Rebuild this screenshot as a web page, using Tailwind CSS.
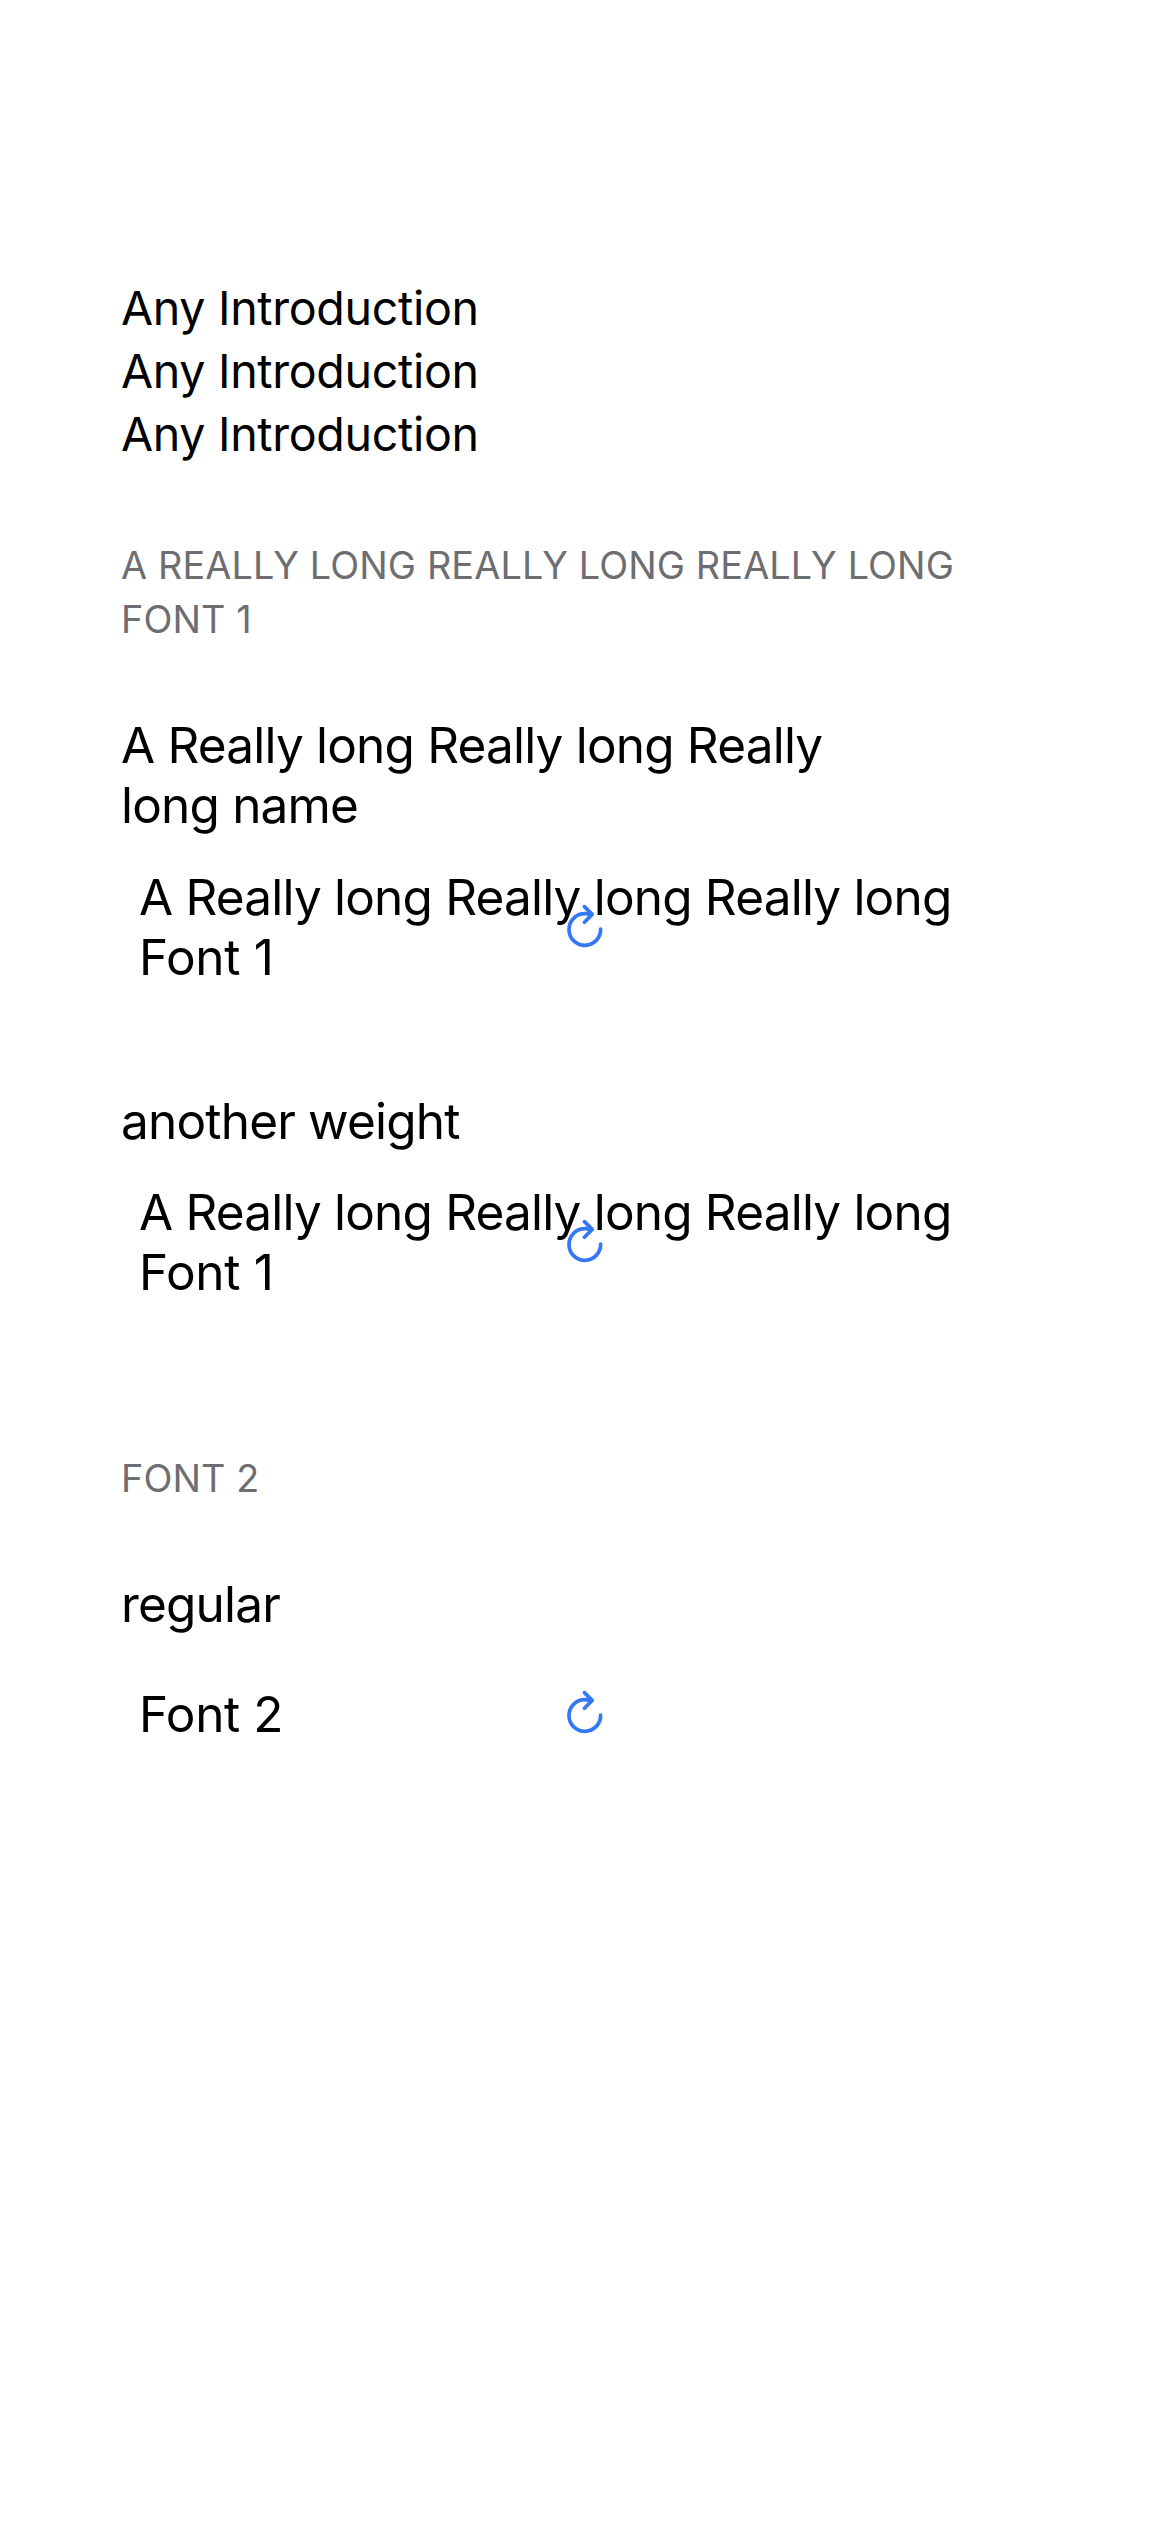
<!DOCTYPE html>
<html lang="en"><head><meta charset="utf-8"><title>Fonts</title>
<script src="https://cdn.jsdelivr.net/npm/@tailwindcss/browser@4"></script></head>
<body class="bg-white text-black font-['Inter',sans-serif]">
<svg class="hidden"><symbol id="reload" viewBox="0 0 40 46"><path d="M35.6 26A15.8 15.8 0 1 1 19.8 10.7Q23.5 10.7 27 11.4M19.4 3.6l7.8 7.8-7.8 7.8" fill="none" stroke="#3478f6" stroke-width="3.7" stroke-linecap="round" stroke-linejoin="round"/></symbol></svg>
<main class="flex min-h-[2532px] flex-col px-[121px] pt-[277px] text-[49.5px] leading-[60px] tracking-[-0.81px] whitespace-nowrap">
<section class="text-[46.6px] leading-[63px] tracking-[-0.33px]"><p>Any Introduction</p><p>Any Introduction</p><p>Any Introduction</p></section>
<h2 class="mt-[72px] text-[37.8px] leading-[54px] tracking-[0.13px] text-[#6d6d72]">A REALLY LONG REALLY LONG REALLY LONG<br>FONT 1</h2>
<p class="mt-[69px]">A Really long Really long Really<br>long name</p>
<div class="relative mt-[32px] pl-[18px]"><p>A Really long Really long Really long<br><span class="tracking-[-0.3px]">Font 1</span></p>
<svg class="absolute left-[444px] top-[36px] h-[46px] w-[40px]"><use href="#reload"/></svg></div>
<p class="mt-[104px]">another weight</p>
<div class="relative mt-[31px] pl-[18px]"><p>A Really long Really long Really long<br><span class="tracking-[-0.3px]">Font 1</span></p>
<svg class="absolute left-[444px] top-[36px] h-[46px] w-[40px]"><use href="#reload"/></svg></div>
<h2 class="mt-[149px] text-[37.8px] leading-[54px] tracking-[0.13px] text-[#6d6d72]">FONT 2</h2>
<p class="mt-[69px]">regular</p>
<div class="relative mt-[50px] pl-[18px]"><p class="tracking-[-0.4px]">Font 2</p>
<svg class="absolute left-[444px] top-[5px] h-[46px] w-[40px]"><use href="#reload"/></svg></div>
</main></body></html>
